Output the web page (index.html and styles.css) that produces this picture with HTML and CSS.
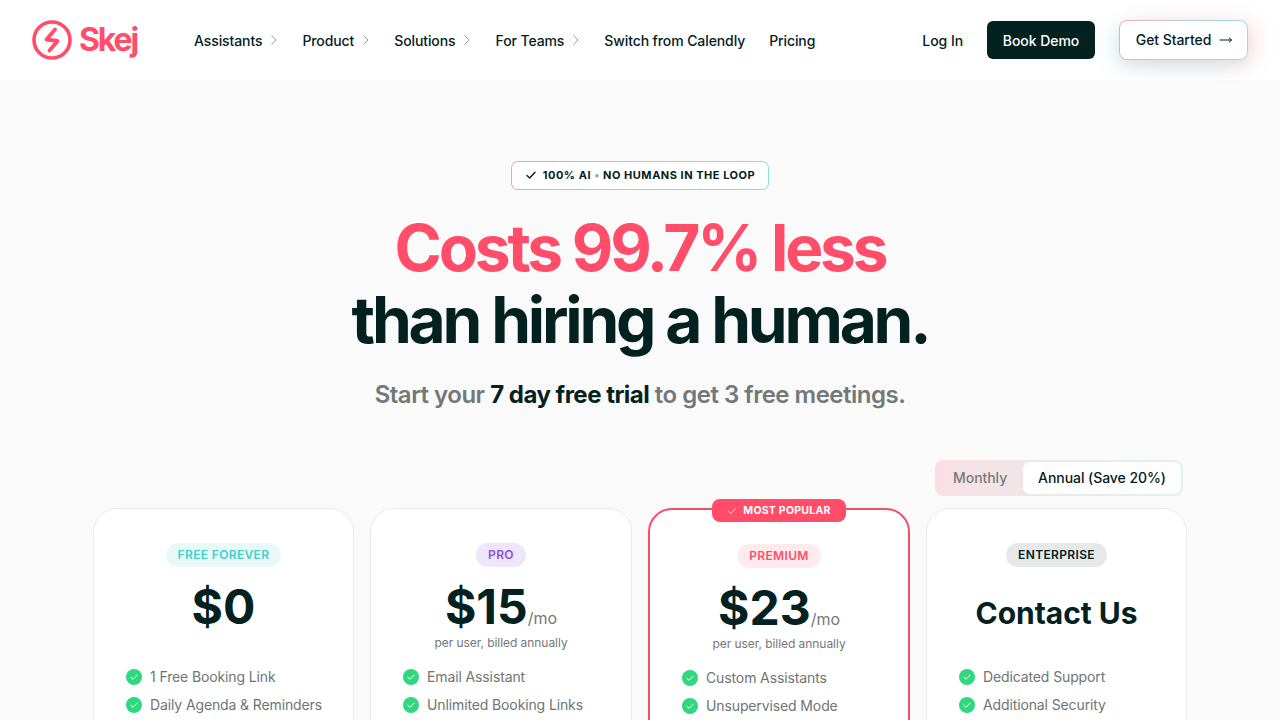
FILE: index.html
```html
<!DOCTYPE html>
<html lang="en">
<head>
<meta charset="utf-8">
<title>Skej Pricing</title>
<link rel="stylesheet" href="styles.css">
</head>
<body>
<header class="nav">
  <a class="logo">
    <svg class="logo-mark" viewBox="0 0 40 40" width="40" height="40" fill="none" stroke="#ff4d6a" stroke-linecap="round" stroke-linejoin="round"><circle cx="20" cy="20" r="18" stroke-width="3.6"/><path d="M23 9.500 L14.500 19.500 L25.500 21 L17.500 30.500" stroke-width="3.800"/></svg>
    <span class="logo-text">Skej</span>
  </a>
  <nav class="links">
    <a class="link">Assistants<svg class="chev" viewBox="0 0 8 12" width="8" height="12"><path d="M1.500 1.500 6 6 1.500 10.500" fill="none" stroke="#9aa0a0"/></svg></a>
    <a class="link">Product<svg class="chev" viewBox="0 0 8 12" width="8" height="12"><path d="M1.500 1.500 6 6 1.500 10.500" fill="none" stroke="#9aa0a0"/></svg></a>
    <a class="link">Solutions<svg class="chev" viewBox="0 0 8 12" width="8" height="12"><path d="M1.500 1.500 6 6 1.500 10.500" fill="none" stroke="#9aa0a0"/></svg></a>
    <a class="link">For Teams<svg class="chev" viewBox="0 0 8 12" width="8" height="12"><path d="M1.500 1.500 6 6 1.500 10.500" fill="none" stroke="#9aa0a0"/></svg></a>
    <a class="link">Switch from Calendly</a>
    <a class="link">Pricing</a>
  </nav>
  <div class="actions">
    <a class="login">Log In</a>
    <a class="demo">Book Demo</a>
    <a class="started">Get Started <svg class="arrow" viewBox="0 0 14 10" width="14" height="10" fill="none" stroke="#03211f" stroke-linecap="round" stroke-linejoin="round"><path d="M1 5H12.500M10.300 3 12.500 5 10.300 7"/></svg></a>
  </div>
</header>
<main class="main">
  <div class="badge">
    <svg viewBox="0 0 12 12" width="12" height="12" fill="none" stroke="#03211f" stroke-width="1.400" stroke-linecap="round" stroke-linejoin="round"><path d="M2 6.500 4.700 9 10 3.200"/></svg>
    <span>100% AI <i class="dot">•</i> NO HUMANS IN THE LOOP</span>
  </div>
  <h1 class="title"><span class="pink">Costs 99.7% less</span><br>than hiring a human.</h1>
  <p class="sub">Start your <b>7 day free trial</b> to get 3 free meetings.</p>
  <div class="toggle-row">
    <div class="toggle"><span class="opt">Monthly</span><span class="opt on">Annual (Save 20%)</span></div>
  </div>
  <section class="cards">
    <article class="card">
      <div class="tag-wrap"><span class="tag teal">FREE FOREVER</span></div>
      <div class="price"><span class="amt">$0</span></div>
      <ul class="feats free">
        <li><svg class="ck" viewBox="0 0 16 16"><circle cx="8" cy="8" r="8" fill="#2fd77f"/><path d="M4.800 8.300 7 10.300 11.200 6" fill="none" stroke="#fff" stroke-linecap="round" stroke-linejoin="round"/></svg>1 Free Booking Link</li>
        <li><svg class="ck" viewBox="0 0 16 16"><circle cx="8" cy="8" r="8" fill="#2fd77f"/><path d="M4.800 8.300 7 10.300 11.200 6" fill="none" stroke="#fff" stroke-linecap="round" stroke-linejoin="round"/></svg>Daily Agenda &amp; Reminders</li>
      </ul>
    </article>
    <article class="card">
      <div class="tag-wrap"><span class="tag purple">PRO</span></div>
      <div class="price"><span class="amt">$15</span><span class="per">/mo</span></div>
      <p class="billed">per user, billed annually</p>
      <ul class="feats">
        <li><svg class="ck" viewBox="0 0 16 16"><circle cx="8" cy="8" r="8" fill="#2fd77f"/><path d="M4.800 8.300 7 10.300 11.200 6" fill="none" stroke="#fff" stroke-linecap="round" stroke-linejoin="round"/></svg>Email Assistant</li>
        <li><svg class="ck" viewBox="0 0 16 16"><circle cx="8" cy="8" r="8" fill="#2fd77f"/><path d="M4.800 8.300 7 10.300 11.200 6" fill="none" stroke="#fff" stroke-linecap="round" stroke-linejoin="round"/></svg>Unlimited Booking Links</li>
      </ul>
    </article>
    <article class="card popular">
      <div class="ribbon"><svg viewBox="0 0 12 12" width="10" height="10" fill="none" stroke="#fff" stroke-linecap="round" stroke-linejoin="round"><path d="M2 6.500 4.700 9 10 3.200"/></svg>MOST POPULAR</div>
      <div class="tag-wrap"><span class="tag rose">PREMIUM</span></div>
      <div class="price"><span class="amt">$23</span><span class="per">/mo</span></div>
      <p class="billed">per user, billed annually</p>
      <ul class="feats">
        <li><svg class="ck" viewBox="0 0 16 16"><circle cx="8" cy="8" r="8" fill="#2fd77f"/><path d="M4.800 8.300 7 10.300 11.200 6" fill="none" stroke="#fff" stroke-linecap="round" stroke-linejoin="round"/></svg>Custom Assistants</li>
        <li><svg class="ck" viewBox="0 0 16 16"><circle cx="8" cy="8" r="8" fill="#2fd77f"/><path d="M4.800 8.300 7 10.300 11.200 6" fill="none" stroke="#fff" stroke-linecap="round" stroke-linejoin="round"/></svg>Unsupervised Mode</li>
      </ul>
    </article>
    <article class="card">
      <div class="tag-wrap"><span class="tag grey">ENTERPRISE</span></div>
      <div class="contact">Contact Us</div>
      <ul class="feats ent">
        <li><svg class="ck" viewBox="0 0 16 16"><circle cx="8" cy="8" r="8" fill="#2fd77f"/><path d="M4.800 8.300 7 10.300 11.200 6" fill="none" stroke="#fff" stroke-linecap="round" stroke-linejoin="round"/></svg>Dedicated Support</li>
        <li><svg class="ck" viewBox="0 0 16 16"><circle cx="8" cy="8" r="8" fill="#2fd77f"/><path d="M4.800 8.300 7 10.300 11.200 6" fill="none" stroke="#fff" stroke-linecap="round" stroke-linejoin="round"/></svg>Additional Security</li>
      </ul>
    </article>
  </section>
</main>
</body>
</html>
```
FILE: styles.css
```css
* { box-sizing: border-box; }
html, body { margin: 0; height: 720px; overflow: hidden; }
body { background: #fafafa; font-family: Inter, "Liberation Sans", sans-serif; color: #03211f; }
a { color: inherit; text-decoration: none; }
.nav { height: 80px; background: #fff; display: flex; align-items: center; padding: 0 32px; }
.logo { display: flex; align-items: center; gap: 7px; width: 162px; }
.logo-mark { display: block; }
.logo-text { font-size: 32px; font-weight: 700; letter-spacing: -2.100px; color: #ff4d6a; line-height: 40px; }
.links { display: flex; gap: 24px; font-size: 14px; font-weight: 450; letter-spacing: -.1px; margin-top: 2px; }
.link { display: flex; align-items: center; gap: 8px; line-height: 20px; }
.link .chev { margin-top: -3px; }
.actions { margin-left: auto; display: flex; align-items: center; font-size: 14px; font-weight: 450; letter-spacing: -.06px; }
.login { margin-right: 24px; }
.demo { background: #03211f; color: #fff; height: 38px; width: 108px; border-radius: 6px; display: flex; align-items: center; justify-content: center; margin-right: 24px; font-weight: 500; }
.started { width: 129px; height: 40px; border-radius: 8px; border: 1px solid transparent; display: flex; align-items: center; justify-content: center; gap: 8px; padding: 0 0 2px 2px; background: linear-gradient(#fff, #fff) padding-box, linear-gradient(90deg, #ecaebd, #92dfe6) border-box; box-shadow: -8px 6px 22px rgba(100, 220, 225, .16), 8px 2px 22px rgba(255, 77, 106, .14), 0 8px 16px rgba(0, 0, 0, .06); }
.arrow { margin-top: 2px; }
.main { display: flex; flex-direction: column; align-items: center; padding-top: 81px; }
.badge { height: 29px; width: 258px; border: 1px solid transparent; border-radius: 7px; display: flex; align-items: center; justify-content: center; gap: 6px; padding: 0 0 2px 0; font-size: 11px; font-weight: 700; letter-spacing: .52px; background: linear-gradient(#fff, #fff) padding-box, linear-gradient(90deg, #f0a3b4, #8fdce4) border-box; }
.dot { font-style: normal; color: #a0a8a8; }
.title { margin: 22px 0 0; font-size: 64px; line-height: 72px; font-weight: 700; letter-spacing: -3.200px; text-align: center; }
.pink { color: #ff4d6a; }
.sub { margin: 23px 0 0; font-size: 24px; line-height: 32px; font-weight: 600; letter-spacing: -.5px; color: #737878; }
.sub b { font-weight: 650; letter-spacing: -.5px; color: #03211f; }
.toggle-row { width: 1094px; display: flex; justify-content: flex-end; margin-top: 49px; padding-right: 4px; }
.toggle { height: 36px; width: 248px; border-radius: 8px; padding: 2px; display: flex; background: linear-gradient(90deg, #fadfe3, #dff3ef); }
.opt { font-size: 14px; font-weight: 450; line-height: 32px; color: #757a7a; width: 86px; padding-left: 16px; letter-spacing: -.05px; }
.opt.on { flex: 1; color: #03211f; background: #fff; border-radius: 7px; text-align: center; padding: 0; }
.cards { width: 1094px; display: grid; grid-template-columns: 261px 262px 262px 261px; gap: 16px; margin-top: 12px; }
.card { position: relative; height: 400px; background: #fff; border: 1px solid #ebebeb; border-radius: 24px; padding: 34px 24px 0; display: flex; flex-direction: column; align-items: stretch; }
.popular { border: 2px solid #f2506c; padding-top: 34px; }
.ribbon { position: absolute; top: -11px; left: 50%; transform: translateX(-50%); height: 23px; width: 134px; border-radius: 8px; background: #ff4d6a; color: #fff; font-size: 10.500px; font-weight: 700; letter-spacing: .25px; display: flex; align-items: center; justify-content: center; gap: 6px; white-space: nowrap; }
.tag-wrap { text-align: center; height: 24px; }
.tag { display: inline-block; height: 24px; line-height: 24px; padding: 0 12px; border-radius: 12px; font-size: 12px; font-weight: 600; letter-spacing: .35px; }
.teal { color: #41cfca; background: #e9f9f8; }
.purple { color: #8b4fe0; background: #efe6fb; }
.rose { color: #ff4d6a; background: #ffebee; }
.grey { color: #03211f; background: #e6e9e8; }
.price { display: flex; align-items: baseline; justify-content: center; height: 60px; margin-top: 10px; }
.amt { font-size: 48px; font-weight: 700; line-height: 60px; color: #03211f; }
.per { font-size: 16px; color: #737878; }
.billed { margin: -2px 0 0; font-size: 12px; line-height: 16px; text-align: center; color: #737878; letter-spacing: -.05px; }
.contact { font-size: 30px; line-height: 36px; font-weight: 700; text-align: center; margin-top: 28px; height: 36px; letter-spacing: -.05px; }
.feats { list-style: none; margin: 16px 0 0; padding: 0 8px; display: flex; flex-direction: column; gap: 8px; font-size: 14px; color: #6f7575; letter-spacing: -.12px; }
.feats.free { margin-top: 30px; }
.feats.ent { margin-top: 36px; }
.feats li { display: flex; align-items: center; gap: 8px; line-height: 20px; white-space: nowrap; }
.ck { width: 16px; height: 16px; flex: none; }
```
